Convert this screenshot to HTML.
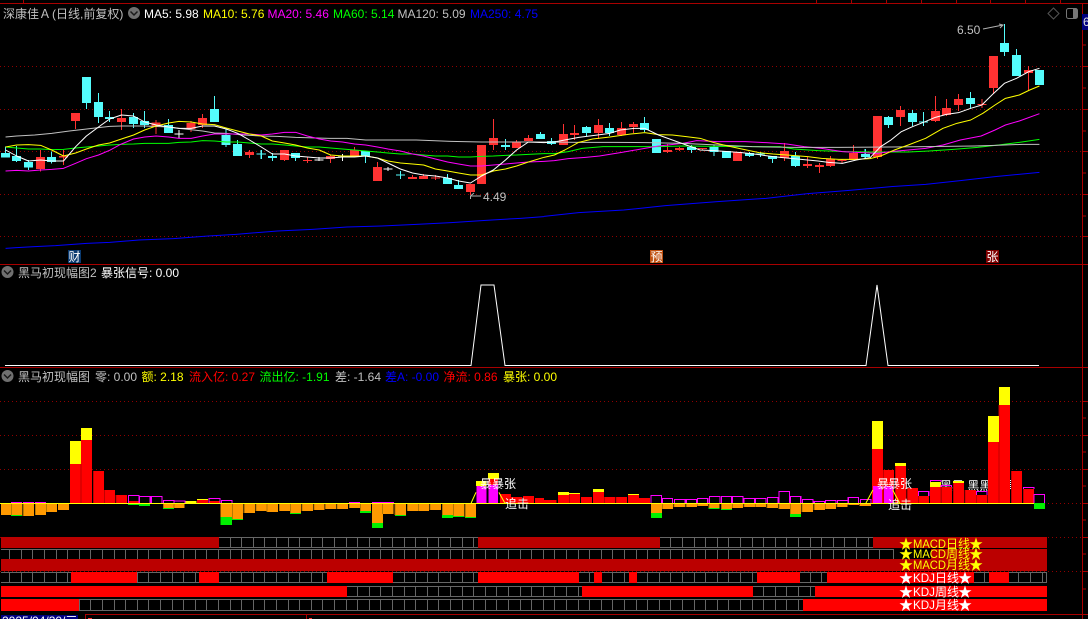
<!DOCTYPE html>
<html><head><meta charset="utf-8"><style>
html,body{margin:0;padding:0;background:#000;width:1088px;height:619px;overflow:hidden}
svg{display:block;position:absolute;left:0;top:0}
text{font-family:"Liberation Sans","WenQuanYi Zen Hei","Noto Sans CJK SC",sans-serif;font-size:12px;white-space:pre}
text.s{font-size:14px}
</style></head><body>
<svg width="1088" height="619" viewBox="0 0 1088 619" xmlns="http://www.w3.org/2000/svg">
<rect width="1088" height="619" fill="#000"/>
<g shape-rendering="crispEdges" fill="none">
<!-- frame -->
<path stroke="#a80000" d="M0 3.5H1088M0 264.5H1088M0 367.5H1088M1082.5 3V619M85 614.5H1088M85.5 614V619M306.5 614V619M23.5 0V3M816.5 0V3M851.5 0V3M886.5 0V3M921.5 0V3M956.5 0V3M990.5 0V3M1025.5 0V3M1060.5 0V3"/>
<path stroke="#a80000" d="M1083 45H1086M1083 66.5H1088M1083 88H1086M1083 109.5H1088M1083 131H1086M1083 151.5H1088M1083 173H1086M1083 194.5H1088M1083 216H1086M1083 236.5H1088M1083 401.5H1088M1083 418H1086M1083 435.5H1088M1083 452H1086M1083 469.5H1088M1083 486H1086M1083 503.5H1088M1083 520H1086M1083 537.5H1088M1083 554H1086M1083 571.5H1088M1083 589H1086"/>
<!-- dotted -->
<path stroke="#900000" stroke-dasharray="1 3" d="M0 66.5H1082M0 109.5H1082M0 151.5H1082M0 194.5H1082M0 236.5H1082M0 401.5H1082M0 435.5H1082M0 469.5H1082M0 503.5H1082M0 537.5H1082"/>

<!-- panel 1 left -->
<g transform="scale(.34694 .33333)">
<path stroke="#54fcfc" stroke-width="3" d="M16 440V473M48 438V486M82 480V510M149 455V490M249 231V327M284 279V369M316 333V366M385 339V384M417 333V384M486 357V399M618 288V366M652 387V441M685 420V468M753 450V477M785 459V483M852 459V483M1054 453V489M1154 513V537M1290 522V552M1322 540V567M1457 417V450M1558 396V417"/>
<path fill="#54fcfc" d="M3 459h26v14h-26zM35 468h26v15h-26zM69 486h26v17h-26zM136 471h26v15h-26zM236 231h26v78h-26zM271 306h26v45h-26zM303 351h26v6h-26zM372 351h26v21h-26zM404 363h26v12h-26zM473 375h26v24h-26zM605 327h26v39h-26zM639 405h26v30h-26zM672 432h26v36h-26zM740 461h26v3h-26zM772 468h26v6h-26zM839 459h26v15h-26zM1041 453h26v15h-26zM1141 524h26v3h-26zM1277 534h26v18h-26zM1309 555h26v12h-26zM1444 435h26v6h-26zM1545 402h26v15h-26z"/>
<path stroke="#ff3232" stroke-width="3" d="M117 450V515M183 450V495M218 339V387M350 327V390M450 360V402M551 363V396M584 342V384M719 450V474M820 450V483M886 471V489M953 465V489M1022 441V471M1088 486V543M1189 525V537M1221 522V537M1255 525V540M1356 552V585M1422 357V450M1489 420V444M1523 405V423"/>
<path fill="#ff3232" d="M104 471h26v36h-26zM170 468h26v5h-26zM205 339h26v24h-26zM337 354h26v12h-26zM437 367h26v14h-26zM538 369h26v18h-26zM571 354h26v21h-26zM706 456h26v9h-26zM807 450h26v30h-26zM873 480h26v3h-26zM940 468h26v9h-26zM1009 450h26v21h-26zM1075 501h26v42h-26zM1176 531h26v6h-26zM1208 528h26v9h-26zM1242 532h26v3h-26zM1343 552h26v24h-26zM1375 435h26v117h-26zM1409 414h26v21h-26zM1476 426h26v18h-26zM1510 414h26v9h-26z"/>
<path stroke="#fff" stroke-width="3" d="M516 390V414M503 402.500H529M920 471V483M907 480.500H933M987 462V483M974 471.500H1000M1118 501V513M1105 507.500H1131"/>
</g>
<!-- panel 1 right -->
<g transform="translate(544 0) scale(.34694 .33333)">
<path stroke="#54fcfc" stroke-width="3" d="M21 414V435M122 378V408M189 369V408M290 351V396M425 435V459M490 435V468M526 453V474M592 456V471M624 456V471M658 468V489M725 456V501M926 447V474M993 348V384M1062 330V378M1094 336V378M1229 276V324M1327 72V168M1362 147V228"/>
<path fill="#54fcfc" d="M8 423h26v9h-26zM109 381h26v18h-26zM176 384h26v15h-26zM277 369h26v21h-26zM311 417h26v42h-26zM412 441h26v9h-26zM477 441h26v15h-26zM513 453h26v21h-26zM579 459h26v9h-26zM611 461h26v3h-26zM645 468h26v9h-26zM712 468h26v30h-26zM913 462h26v9h-26zM980 351h26v24h-26zM1049 339h26v27h-26zM1081 365h26v3h-26zM1216 294h26v18h-26zM1314 129h26v27h-26zM1349 165h26v63h-26zM1415 210h26v45h-26z"/>
<path stroke="#ff3232" stroke-width="3" d="M56 372V435M88 375V420M157 357V417M223 366V408M258 366V399M356 432V459M390 441V453M457 444V450M693 429V483M759 471V504M794 489V519M826 468V501M859 477V489M892 435V480M961 348V477M1028 318V378M1128 288V366M1160 297V348M1195 282V333M1262 297V324M1296 168V282M1397 198V270"/>
<path fill="#ff3232" d="M43 402h26v33h-26zM75 399h26v6h-26zM144 375h26v24h-26zM210 384h26v21h-26zM245 372h26v9h-26zM343 450h26v6h-26zM377 444h26v6h-26zM444 444h26v3h-26zM545 456h26v27h-26zM680 453h26v21h-26zM746 492h26v6h-26zM781 495h26v6h-26zM813 477h26v21h-26zM846 480h26v3h-26zM879 459h26v21h-26zM948 348h26v123h-26zM1015 330h26v21h-26zM1115 333h26v30h-26zM1147 324h26v21h-26zM1182 297h26v18h-26zM1249 312h26v3h-26zM1283 168h26v96h-26zM1384 210h26v9h-26z"/>
</g>
</g>

<!-- MA lines -->
<g fill="none" stroke-width="3" stroke-linejoin="round">
<g transform="scale(.34694 .33333)">
<polyline stroke="#0000ff" points="16,745 48,743 100,740 160,737 250,730 316,727 400,720 500,716 600,708 680,703 800,693 900,688 1000,681 1100,678 1200,673 1300,668 1400,661 1500,655 1568,650"/>
<polyline stroke="#c0c0c0" points="16,411 48,408 100,405 149,400 200,393 250,387 316,379 350,378 417,378 486,381 516,385 584,393 618,399 652,400 700,405 753,408 800,409 852,412 950,415 1000,415 1054,420 1120,420 1200,420 1300,424 1388,426 1480,426 1568,426"/>
<polyline stroke="#00ff00" points="16,441 48,444 82,447 117,447 149,449 183,448 218,444 249,441 284,438 316,435 350,433 385,432 417,430 450,430 486,430 516,427 551,426 584,422 618,423 652,426 685,426 719,429 753,432 785,432 820,435 852,438 886,441 920,441 953,444 987,447 1022,450 1054,453 1088,456 1118,459 1154,462 1189,462 1221,465 1255,468 1290,468 1322,471 1356,471 1388,469 1422,468 1457,466 1489,465 1523,463 1568,461"/>
<polyline stroke="#ff00ff" points="16,513 48,511 82,513 117,510 149,508 183,505 218,490 249,476 284,465 316,451 350,432 385,417 417,411 450,408 486,411 516,415 551,415 584,408 618,402 652,402 685,402 719,402 753,405 785,402 820,397 852,397 886,408 920,417 953,423 987,426 1022,432 1054,435 1088,441 1118,447 1154,453 1189,462 1221,468 1255,477 1290,486 1322,492 1356,498 1388,498 1422,495 1457,492 1489,489 1523,486 1568,484"/>
<polyline stroke="#ffff00" points="16,441 48,435 82,434 117,436 149,450 183,468 218,459 249,447 284,435 316,429 350,417 385,405 417,390 450,378 486,369 516,364 551,366 584,372 618,374 652,384 685,393 719,402 753,408 785,423 820,429 852,435 886,444 920,450 953,465 987,468 1022,468 1054,468 1088,474 1118,483 1154,489 1189,492 1221,495 1255,507 1290,513 1322,519 1356,525 1388,525 1422,513 1457,507 1489,498 1523,486 1568,472"/>
<polyline stroke="#fff" points="16,450 48,468 82,483 117,480 149,483 183,483 218,440 249,408 284,381 316,357 350,345 385,348 417,366 450,375 486,381 516,385 551,385 584,378 618,378 652,387 685,400 719,420 753,441 785,462 820,462 852,468 886,471 920,474 953,474 987,471 1022,471 1054,468 1088,474 1118,489 1154,507 1189,519 1221,525 1255,528 1290,534 1322,543 1356,549 1388,528 1422,510 1457,480 1489,450 1523,426 1568,428"/>
</g>
<g transform="translate(544 0) scale(.34694 .33333)">
<polyline stroke="#0000ff" points="0,649 100,638 230,630 350,617 500,605 640,595 760,581 880,571 1000,560 1100,553 1200,542 1300,530 1428,517"/>
<polyline stroke="#00ff00" points="0,461 30,461 70,455 110,445 170,440 260,440 330,440 400,438 500,439 600,440 680,440 720,447 790,452 870,455 950,456 1000,456 1050,456 1110,453 1180,448 1250,442 1310,435 1370,427 1428,418"/>
<polyline stroke="#ff00ff" points="0,484 30,482 70,476 120,472 160,468 220,458 280,447 330,438 400,430 440,422 500,425 580,425 640,428 700,432 750,440 800,445 860,455 900,457 960,460 1000,455 1050,450 1100,445 1150,435 1200,420 1260,408 1300,390 1330,375 1370,363 1428,341"/>
<polyline stroke="#c0c0c0" points="0,426 100,427 200,427 300,428 400,430 500,435 600,440 720,442 850,442 1000,441 1100,440 1240,438 1300,436 1380,433 1428,433"/>
<polyline stroke="#ffff00" points="0,472 30,465 60,450 100,427 140,417 190,411 250,402 290,398 330,404 370,405 410,410 450,415 490,428 530,438 570,447 620,458 660,462 700,465 760,470 800,475 850,478 900,478 940,476 970,468 1010,450 1050,435 1100,415 1150,385 1190,370 1230,360 1265,340 1300,315 1330,295 1370,285 1400,270 1428,258"/>
<polyline stroke="#fff" points="0,428 30,426 60,420 100,412 140,407 190,400 220,390 260,385 290,385 330,405 370,420 410,435 450,450 490,452 530,455 570,458 620,464 660,470 700,474 760,480 790,483 820,487 860,490 900,480 940,473 970,440 1000,420 1030,395 1062,380 1094,367 1128,352 1160,343 1195,338 1230,325 1262,315 1296,280 1327,250 1362,235 1397,215 1428,205"/>
</g>
</g>

<!-- header text -->
<text x="3" y="18" fill="#c0c0c0">深康佳Ａ</text>
<text x="52" y="18" fill="#c0c0c0">(日线,前复权)</text>
<circle cx="134" cy="13" r="6" fill="#707070"/><path d="M130.500 11.500L134 15L137.500 11.500" stroke="#1a1a1a" stroke-width="1.500" fill="none"/>
<text x="144" y="18" fill="#fff">MA5: 5.98</text>
<text x="203" y="18" fill="#ffff00">MA10: 5.76</text>
<text x="267.500" y="18" fill="#ff00ff">MA20: 5.46</text>
<text x="333" y="18" fill="#00ff00">MA60: 5.14</text>
<text x="397.500" y="18" fill="#c0c0c0">MA120: 5.09</text>
<text x="470" y="18" fill="#0000ff">MA250: 4.75</text>

<!-- top right icons -->
<path d="M1053.500 8L1059 13.500L1053.500 19L1048 13.500Z" fill="none" stroke="#555"/>
<rect x="1066.500" y="8.500" width="11" height="10" rx="2" fill="none" stroke="#777"/><rect x="1073" y="9" width="4" height="9" fill="#777"/>
<rect x="1082" y="14" width="6" height="16" fill="#000080"/><text x="1083" y="26" fill="#ddd">6</text>

<!-- annotations -->
<text x="483" y="201" fill="#c0c0c0">4.49</text>
<path d="M481 196H471M474 193L470.500 196V199" stroke="#b0b0b0" fill="none"/>
<text x="957" y="34" fill="#c0c0c0">6.50</text>
<path d="M983 29L1003 25M999 24L1003 25L1000 28" stroke="#b0b0b0" fill="none"/>

<!-- markers -->
<rect x="68" y="250" width="13" height="13" fill="#0a3a70"/><text x="68.500" y="261" fill="#fff">财</text>
<rect x="650" y="250" width="13" height="13" fill="#c05010"/><text x="650.500" y="261" fill="#fff">预</text>
<rect x="986" y="250" width="13" height="13" fill="#800000"/><text x="986.500" y="261" fill="#fff">张</text>

<!-- panel 2 -->
<circle cx="7.500" cy="272" r="6" fill="#707070"/><path d="M4 270.500L7.500 274L11 270.500" stroke="#1a1a1a" stroke-width="1.500" fill="none"/>
<text x="18" y="277" fill="#c0c0c0">黑马初现幅图2</text>
<text x="101" y="277" fill="#fff">暴张信号: 0.00</text>
<polyline fill="none" stroke="#fff" points="5,365.500 471,365.500 481,285 494,285 505,365.500 866,365.500 877,285 888,365.500 1039,365.500"/>

<!-- panel 3 title -->
<circle cx="7.500" cy="376" r="6" fill="#707070"/><path d="M4 374.500L7.500 378L11 374.500" stroke="#1a1a1a" stroke-width="1.500" fill="none"/>
<text x="18" y="381" fill="#c0c0c0">黑马初现幅图</text>
<text x="95" y="381" fill="#c0c0c0">零: 0.00</text>
<text x="141.500" y="381" fill="#ffff00">额: 2.18</text>
<text x="189" y="381" fill="#ff0000">流入亿: 0.27</text>
<text x="259.500" y="381" fill="#00ff00">流出亿: -1.91</text>
<text x="335" y="381" fill="#c0c0c0">差: -1.64</text>
<text x="385" y="381" fill="#0000ff">差A: -0.00</text>
<text x="443.500" y="381" fill="#ff0000">净流: 0.86</text>
<text x="503" y="381" fill="#ffff00">暴张: 0.00</text>

<text x="940" y="490" fill="#fff">黑黑 黑黑</text>
<path d="M1010.500 480V490" stroke="#fff" stroke-dasharray="1 1" shape-rendering="crispEdges"/>

<!-- bars left -->
<g transform="translate(0 365) scale(.34694 .33333)" shape-rendering="crispEdges">
<path fill="#00f000" d="M32 450h32v3h-32zM369 414h32v6h-32zM401 414h32v9h-32zM470 429h32v3h-32zM636 456h32v24h-32zM669 462h32v3h-32zM836 444h32v3h-32zM1038 438h32v6h-32zM1072 474h32v15h-32zM1138 450h32v3h-32zM1274 450h32v9h-32zM1306 453h32v3h-32zM1340 456h32v3h-32z"/>
<path fill="#ff9900" d="M3 414h29V450h-29zM32 414h32V450h-32zM66 414h32V453h-32zM101 414h32V450h-32zM133 414h32V441h-32zM167 414h32V435h-32zM470 414h32V429h-32zM500 414h32V429h-32zM636 414h32V456h-32zM669 414h32V462h-32zM703 414h32V444h-32zM737 414h32V438h-32zM769 414h32V441h-32zM804 414h32V438h-32zM836 414h32V444h-32zM870 414h32V438h-32zM904 414h32V435h-32zM937 414h32V432h-32zM971 414h32V432h-32zM1006 414h32V429h-32zM1038 414h32V438h-32zM1072 414h32V474h-32zM1102 414h32V447h-32zM1138 414h32V450h-32zM1173 414h32V438h-32zM1205 414h32V438h-32zM1239 414h32V435h-32zM1274 414h32V450h-32zM1306 414h32V453h-32zM1340 414h32V456h-32z"/>
<path stroke="#b87800" stroke-width="3" fill="none" d="M33 414V450M67 414V453M102 414V450M134 414V441M471 414V429M501 414V429M670 414V462M704 414V444M738 414V438M770 414V441M805 414V438M837 414V444M871 414V438M905 414V435M938 414V432M972 414V432M1007 414V429M1039 414V438M1103 414V447M1139 414V450M1174 414V438M1206 414V438M1240 414V435M1275 414V450M1307 414V453M1341 414V456"/>
<path fill="#ff0000" d="M202 297h32V414h-32zM233 225h32V414h-32zM268 318h32V414h-32zM300 375h32V414h-32zM334 390h32V414h-32zM369 408h32V414h-32zM568 405h32V414h-32zM602 408h32V414h-32zM1441 387h32V414h-32zM1473 396h32V414h-32zM1507 393h32V414h-32zM1542 399h26V414h-26z"/>
<path stroke="#c00000" stroke-width="3" fill="none" d="M234 297V414M269 318V414M301 375V414M335 390V414"/>
<path fill="#ffff00" d="M202 228h32v69h-32zM233 189h32v36h-32zM535 408h32v6h-32zM568 402h32v3h-32zM1372 348h30v15h-30zM1407 324h31v18h-31z"/>
<path fill="#ff0000" d="M1408 342h28v18h-28z"/>
<path fill="#ff00ff" d="M1374 363h28v51h-28zM1408 360h28v54h-28zM32 411h32v3h-32zM66 411h32v3h-32zM101 411h32v3h-32zM1006 411h32v3h-32zM1072 411h64v3h-64z"/>
<path stroke="#ff00ff" stroke-width="3" fill="none" d="M370 414V391h31V414M402 414V394h30V414M436 414V394h31V414M471 414V406h31V414M502 414V408h31V414M603 414V400h31V414M638 414V406h31V414"/>
<path stroke="#ffff00" stroke-width="3" fill="none" d="M0 415H1568"/>
<path stroke="#ffff00" stroke-width="3" fill="none" shape-rendering="auto" d="M1358 414L1372 382M1438 382L1455 414"/>
</g>
<!-- bars right -->
<g transform="translate(544 365) scale(.34694 .33333)" shape-rendering="crispEdges">
<path fill="#00f000" d="M308 444h32v15h-32zM474 429h32v3h-32zM510 432h32v3h-32zM709 447h32v9h-32zM1412 414h32v18h-32z"/>
<path fill="#ff9900" d="M308 414h32V444h-32zM340 414h32V432h-32zM374 414h32V426h-32zM409 414h32V426h-32zM441 414h32V423h-32zM474 414h32V429h-32zM510 414h32V432h-32zM542 414h32V429h-32zM576 414h32V426h-32zM608 414h32V426h-32zM642 414h32V429h-32zM677 414h32V432h-32zM709 414h32V447h-32zM743 414h32V441h-32zM778 414h32V435h-32zM810 414h32V432h-32zM843 414h32V426h-32zM876 414h32V420h-32zM910 414h32V423h-32z"/>
<path stroke="#b87800" stroke-width="3" fill="none" d="M341 414V432M375 414V426M410 414V426M442 414V423M475 414V429M511 414V432M543 414V429M577 414V426M609 414V426M643 414V429M678 414V432M710 414V447M744 414V441M779 414V435M811 414V432M844 414V426M877 414V420"/>
<path fill="#ff0000" d="M-4 405h40V414h-40zM40 390h32V414h-32zM72 387h32V414h-32zM106 396h32V414h-32zM141 381h32V414h-32zM173 396h32V414h-32zM207 396h32V414h-32zM242 390h32V414h-32zM274 399h32V414h-32zM945 252h32V414h-32zM977 315h32V414h-32zM1012 303h32V414h-32zM1046 369h32V414h-32zM1078 393h32V414h-32zM1112 366h32V414h-32zM1144 366h32V414h-32zM1179 354h32V414h-32zM1213 375h32V414h-32zM1246 390h32V414h-32zM1280 231h32V414h-32zM1311 120h32V414h-32zM1346 318h32V414h-32zM1381 372h32V414h-32z"/>
<path stroke="#c00000" stroke-width="3" fill="none" d="M73 387V414M174 396V414M208 396V414M978 315V414M1013 303V414M1047 369V414M1079 393V414M1145 366V414M1180 354V414M1214 375V414M1247 390V414M1312 120V414M1347 318V414M1382 372V414"/>
<path fill="#ffff00" d="M40 381h32v9h-32zM72 384h32v3h-32zM141 372h32v9h-32zM242 387h32v3h-32zM945 168h32v84h-32zM1012 294h32v9h-32zM1112 351h32v15h-32zM1179 348h32v6h-32zM1280 153h32v78h-32zM1311 66h32v54h-32z"/>
<path fill="#ff00ff" d="M948 363h26v53h-26zM980 363h26v53h-26z"/>
<path stroke="#ff00ff" stroke-width="3" fill="none" d="M309 414V391h30V414M341 414V400h30V414M376 414V403h30V414M410 414V403h30V414M442 414V400h30V414M477 414V394h30V414M511 414V394h30V414M543 414V394h30V414M577 414V400h30V414M610 414V400h30V414M644 414V397h30V414M678 414V379h30V414M710 414V394h30V414M745 414V403h30V414M779 414V409h30V414M811 414V406h30V414M846 414V406h30V414M877 414V397h30V414M912 414V403h30V414M1079 393V379h30V393M1114 351V346h30V351M1145 366V361h30V366M1247 390V379h30V390M1382 372V367h30V372M1413 414V388h30V414"/>
<path stroke="#ffff00" stroke-width="3" fill="none" d="M0 415H1412"/>
<path stroke="#ffff00" stroke-width="3" fill="none" shape-rendering="auto" d="M928 414L948 375M1005 375L1025 414"/>
</g>
<text x="480" y="488" fill="#fff">暴</text><text x="492" y="488" fill="#fff">暴张</text>
<text x="505" y="508" fill="#fff">追击</text>
<text x="877" y="488" fill="#fff">暴</text><text x="888" y="488" fill="#fff">暴张</text>
<text x="888" y="509" fill="#fff">追击</text>

<!-- signal rows -->
<g shape-rendering="crispEdges" fill="none">
<path stroke="#666" d="M9.500 537V612M21.500 537V612M32.500 537V612M44.500 537V612M56.500 537V612M67.500 537V612M79.500 537V612M90.500 537V612M102.500 537V612M114.500 537V612M125.500 537V612M137.500 537V612M148.500 537V612M160.500 537V612M172.500 537V612M183.500 537V612M195.500 537V612M206.500 537V612M218.500 537V612M230.500 537V612M241.500 537V612M253.500 537V612M264.500 537V612M276.500 537V612M288.500 537V612M299.500 537V612M311.500 537V612M322.500 537V612M334.500 537V612M346.500 537V612M357.500 537V612M369.500 537V612M380.500 537V612M392.500 537V612M404.500 537V612M415.500 537V612M427.500 537V612M438.500 537V612M450.500 537V612M462.500 537V612M473.500 537V612M485.500 537V612M496.500 537V612M508.500 537V612M520.500 537V612M531.500 537V612M543.500 537V612M554.500 537V612M566.500 537V612M578.500 537V612M589.500 537V612M601.500 537V612M612.500 537V612M624.500 537V612M636.500 537V612M647.500 537V612M659.500 537V612M670.500 537V612M682.500 537V612M694.500 537V612M705.500 537V612M717.500 537V612M728.500 537V612M740.500 537V612M752.500 537V612M763.500 537V612M775.500 537V612M786.500 537V612M798.500 537V612M810.500 537V612M821.500 537V612M833.500 537V612M844.500 537V612M856.500 537V612M868.500 537V612M879.500 537V612M893.500 537V612M902.500 537V612M914.500 537V612M926.500 537V612M937.500 537V612M949.500 537V612M960.500 537V612M972.500 537V612M984.500 537V612M995.500 537V612M1007.500 537V612M1018.500 537V612M1030.500 537V612M1042.500 537V612"/>
<path stroke="#666" d="M1 537.500H1047M1 547.500H1047M1 549.500H1047M1 572.500H1047M1 582.500H1047M1 586.500H1047M1 596.500H1047M1 599.500H1047M1 610.500H1047M1046.500 572V583"/>
<path fill="#000" d="M0 548h1048v1H0zM0 571h1048v1H0zM0 583h1048v3H0zM0 597h1048v2H0zM0 611h1048v2H0zM894 549H931V559H894z"/>
<path fill="#bb0000" d="M1 537H219V548H1zM478 537H660V548H478zM873 537H1047V548H873zM931 549H1047V559H931zM1 559H1047V571H1z"/>
<path fill="#ff0000" d="M71 572H137V583H71zM199 572H219V583H199zM327 572H393V583H327zM478 572H579V583H478zM594 572H602V583H594zM629 572H637V583H629zM757 572H800V583H757zM827 572H974V583H827zM989 572H1009V583H989zM1 586H347V597H1zM582 586H753V597H582zM815 586H1047V597H815zM1 599H79V611H1zM803 599H1047V611H803z"/>
<path stroke="#900000" stroke-dasharray="1 3" d="M0 571.500H1082"/>
</g>
<g>
<text class="s" x="899" y="549" fill="#ffff00">★</text><text x="913" y="548" fill="#ffff00" textLength="33" lengthAdjust="spacingAndGlyphs">MACD</text><text x="946" y="548" fill="#ffff00">日线</text><text class="s" x="969" y="549" fill="#ffff00">★</text>
<text class="s" x="899" y="559" fill="#ffff00">★</text><text x="913" y="558" fill="#ffff00" textLength="33" lengthAdjust="spacingAndGlyphs">MACD</text><text x="946" y="558" fill="#ffff00">周线</text><text class="s" x="969" y="559" fill="#ffff00">★</text>
<text class="s" x="899" y="570" fill="#ffff00">★</text><text x="913" y="569" fill="#ffff00" textLength="33" lengthAdjust="spacingAndGlyphs">MACD</text><text x="946" y="569" fill="#ffff00">月线</text><text class="s" x="969" y="570" fill="#ffff00">★</text>
<text class="s" x="899" y="583" fill="#fff">★</text><text x="913" y="582" fill="#fff" textLength="22" lengthAdjust="spacingAndGlyphs">KDJ</text><text x="935" y="582" fill="#fff">日线</text><text class="s" x="958" y="583" fill="#fff">★</text>
<text class="s" x="899" y="597" fill="#fff">★</text><text x="913" y="596" fill="#fff" textLength="22" lengthAdjust="spacingAndGlyphs">KDJ</text><text x="935" y="596" fill="#fff">周线</text><text class="s" x="958" y="597" fill="#fff">★</text>
<text class="s" x="899" y="610" fill="#fff">★</text><text x="913" y="609" fill="#fff" textLength="22" lengthAdjust="spacingAndGlyphs">KDJ</text><text x="935" y="609" fill="#fff">月线</text><text class="s" x="958" y="610" fill="#fff">★</text>
</g>

<!-- date box -->
<rect x="1" y="615" width="77" height="4" fill="#000080"/>
<text x="2" y="625" fill="#fff">2025/04/30/三</text>
<path d="M88 618h4v1h-4zM309 618h3v1h-3z" fill="#ff3232"/>
</svg>
</body></html>
